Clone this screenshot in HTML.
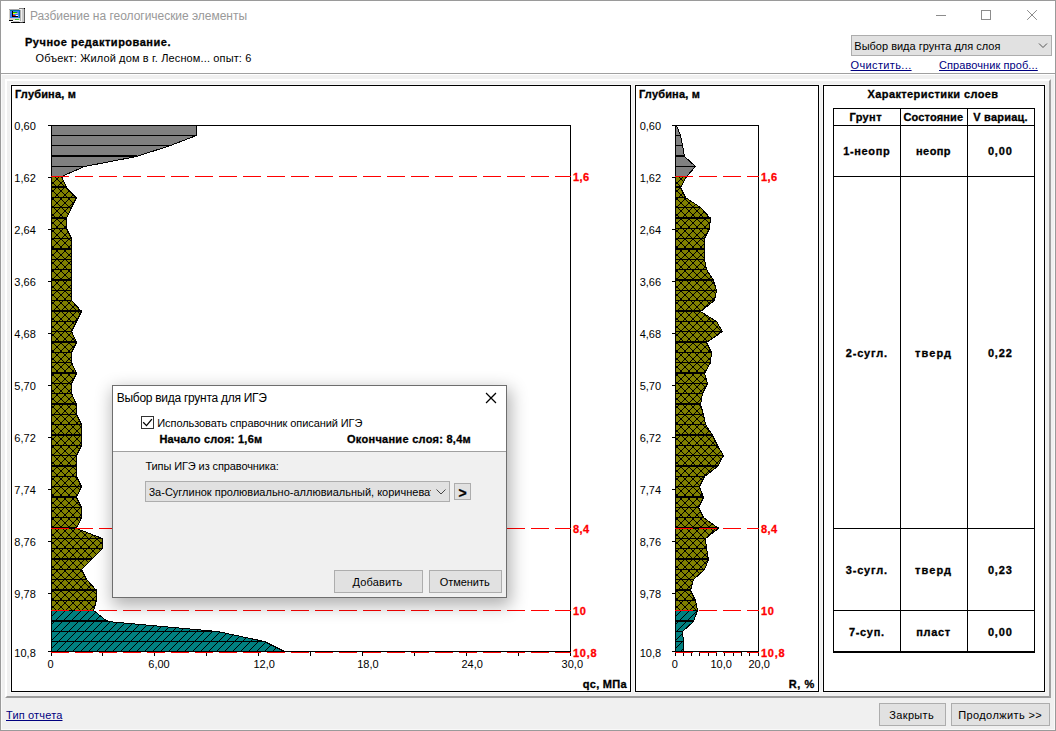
<!DOCTYPE html>
<html lang="ru"><head><meta charset="utf-8"><title>Разбиение на геологические элементы</title>
<style>
html,body{margin:0;padding:0;}
body{width:1056px;height:731px;position:relative;overflow:hidden;background:#fff;font-family:"Liberation Sans",sans-serif;}
.a{position:absolute;box-sizing:border-box;}
.t{position:absolute;white-space:nowrap;line-height:1;display:block;}
.btn{position:absolute;box-sizing:border-box;background:#e1e1e1;border:1px solid #adadad;}
svg{position:absolute;left:0;top:0;}
</style></head><body>
<!-- window frame -->
<div class="a" style="left:0;top:0;width:1056px;height:731px;border:1px solid #9a9a9a;background:#fff;"></div>
<div class="a" style="left:1px;top:73px;width:1054px;height:1px;background:#a0a0a0;"></div>
<div class="a" style="left:1px;top:74px;width:1054px;height:656px;background:#f0f0f0;border:1px solid #f9f9f9;border-top-color:#fff;"></div>
<!-- raised frame -->
<div class="a" style="left:5px;top:79px;width:1046px;height:619px;border-top:2px solid #fff;border-left:2px solid #fff;border-right:2px solid #a0a0a0;border-bottom:2px solid #9c9c9c;"></div>
<!-- panels -->
<div class="a" style="left:11px;top:85px;width:620px;height:607px;border:1px solid #000;background:#fff;box-shadow:0 0 0 1px #f7f7f7;"></div>
<div class="a" style="left:635px;top:85px;width:184px;height:607px;border:1px solid #000;background:#fff;box-shadow:0 0 0 1px #f7f7f7;"></div>
<div class="a" style="left:823px;top:85px;width:222px;height:607px;border:1px solid #000;background:#fff;box-shadow:0 0 0 1px #f7f7f7;"></div>
<!-- combo top right -->
<div class="btn" style="left:851px;top:35px;width:201px;height:21px;"></div>
<!-- buttons -->
<div class="btn" style="left:879px;top:703px;width:67px;height:23px;"></div>
<div class="btn" style="left:951px;top:703px;width:99px;height:23px;"></div>

<svg width="1056" height="731" viewBox="0 0 1056 731" shape-rendering="crispEdges">
<defs>
<pattern id="cross" width="8" height="8" patternUnits="userSpaceOnUse" fill="#000"><rect x="0" y="3" width="1" height="1"/><rect x="0" y="2" width="1" height="1"/><rect x="1" y="2" width="1" height="1"/><rect x="1" y="3" width="1" height="1"/><rect x="2" y="1" width="1" height="1"/><rect x="2" y="4" width="1" height="1"/><rect x="3" y="0" width="1" height="1"/><rect x="3" y="5" width="1" height="1"/><rect x="4" y="7" width="1" height="1"/><rect x="4" y="6" width="1" height="1"/><rect x="5" y="6" width="1" height="1"/><rect x="5" y="7" width="1" height="1"/><rect x="6" y="5" width="1" height="1"/><rect x="6" y="0" width="1" height="1"/><rect x="7" y="4" width="1" height="1"/><rect x="7" y="1" width="1" height="1"/></pattern>
<pattern id="bdiag" width="8" height="8" patternUnits="userSpaceOnUse" fill="#000"><rect x="0" y="3" width="1" height="1"/><rect x="1" y="2" width="1" height="1"/><rect x="2" y="1" width="1" height="1"/><rect x="3" y="0" width="1" height="1"/><rect x="4" y="7" width="1" height="1"/><rect x="5" y="6" width="1" height="1"/><rect x="6" y="5" width="1" height="1"/><rect x="7" y="4" width="1" height="1"/></pattern>
</defs>
<g id="chartL">
<polygon points="51.5,125.5 196.5,125.5 196.5,135.5 170.5,145.5 136.5,156.5 84.5,166.5 61.5,176.5 51.5,176.5" fill="#808080"/>
<polygon points="51.5,176.5 61.5,176.5 66.5,187.5 76.5,197.5 71.5,207.5 66.5,218.5 66.5,228.5 71.5,238.5 71.5,249.5 71.5,259.5 71.5,269.5 71.5,280.5 71.5,290.5 71.5,300.5 81.5,311.5 76.5,321.5 71.5,331.5 76.5,342.5 71.5,352.5 71.5,362.5 76.5,373.5 71.5,383.5 71.5,393.5 76.5,404.5 76.5,414.5 81.5,424.5 81.5,435.5 81.5,445.5 76.5,455.5 76.5,466.5 76.5,476.5 81.5,486.5 76.5,497.5 81.5,507.5 81.5,517.5 76.5,528.5 51.5,528.5" fill="#808000"/>
<polygon points="51.5,176.5 61.5,176.5 66.5,187.5 76.5,197.5 71.5,207.5 66.5,218.5 66.5,228.5 71.5,238.5 71.5,249.5 71.5,259.5 71.5,269.5 71.5,280.5 71.5,290.5 71.5,300.5 81.5,311.5 76.5,321.5 71.5,331.5 76.5,342.5 71.5,352.5 71.5,362.5 76.5,373.5 71.5,383.5 71.5,393.5 76.5,404.5 76.5,414.5 81.5,424.5 81.5,435.5 81.5,445.5 76.5,455.5 76.5,466.5 76.5,476.5 81.5,486.5 76.5,497.5 81.5,507.5 81.5,517.5 76.5,528.5 51.5,528.5" fill="url(#cross)"/>
<polygon points="51.5,528.5 76.5,528.5 102.5,538.5 102.5,548.5 91.5,559.5 81.5,569.5 86.5,579.5 96.5,590.5 96.5,600.5 93.5,610.5 51.5,610.5" fill="#808000"/>
<polygon points="51.5,528.5 76.5,528.5 102.5,538.5 102.5,548.5 91.5,559.5 81.5,569.5 86.5,579.5 96.5,590.5 96.5,600.5 93.5,610.5 51.5,610.5" fill="url(#cross)"/>
<polygon points="51.5,610.5 93.5,610.5 107.5,621.5 217.5,631.5 264.5,641.5 284.5,651.5 51.5,651.5" fill="#008080"/>
<polygon points="51.5,610.5 93.5,610.5 107.5,621.5 217.5,631.5 264.5,641.5 284.5,651.5 51.5,651.5" fill="url(#bdiag)"/>
<rect x="51" y="135" width="146" height="1" fill="#000"/>
<rect x="51" y="145" width="120" height="1" fill="#000"/>
<rect x="51" y="155" width="86" height="2" fill="#000"/>
<rect x="51" y="166" width="34" height="1" fill="#000"/>
<rect x="51" y="176" width="11" height="1" fill="#000"/>
<rect x="51" y="186" width="16" height="2" fill="#000"/>
<rect x="51" y="197" width="26" height="1" fill="#000"/>
<rect x="51" y="207" width="21" height="1" fill="#000"/>
<rect x="51" y="217" width="16" height="2" fill="#000"/>
<rect x="51" y="228" width="16" height="1" fill="#000"/>
<rect x="51" y="238" width="21" height="1" fill="#000"/>
<rect x="51" y="248" width="21" height="2" fill="#000"/>
<rect x="51" y="259" width="21" height="1" fill="#000"/>
<rect x="51" y="269" width="21" height="1" fill="#000"/>
<rect x="51" y="279" width="21" height="2" fill="#000"/>
<rect x="51" y="290" width="21" height="1" fill="#000"/>
<rect x="51" y="300" width="21" height="1" fill="#000"/>
<rect x="51" y="310" width="31" height="2" fill="#000"/>
<rect x="51" y="321" width="26" height="1" fill="#000"/>
<rect x="51" y="331" width="21" height="1" fill="#000"/>
<rect x="51" y="341" width="26" height="2" fill="#000"/>
<rect x="51" y="352" width="21" height="1" fill="#000"/>
<rect x="51" y="362" width="21" height="1" fill="#000"/>
<rect x="51" y="372" width="26" height="2" fill="#000"/>
<rect x="51" y="383" width="21" height="1" fill="#000"/>
<rect x="51" y="393" width="21" height="1" fill="#000"/>
<rect x="51" y="403" width="26" height="2" fill="#000"/>
<rect x="51" y="414" width="26" height="1" fill="#000"/>
<rect x="51" y="424" width="31" height="1" fill="#000"/>
<rect x="51" y="434" width="31" height="2" fill="#000"/>
<rect x="51" y="445" width="31" height="1" fill="#000"/>
<rect x="51" y="455" width="26" height="1" fill="#000"/>
<rect x="51" y="465" width="26" height="2" fill="#000"/>
<rect x="51" y="476" width="26" height="1" fill="#000"/>
<rect x="51" y="486" width="31" height="1" fill="#000"/>
<rect x="51" y="496" width="26" height="2" fill="#000"/>
<rect x="51" y="507" width="31" height="1" fill="#000"/>
<rect x="51" y="517" width="31" height="1" fill="#000"/>
<rect x="51" y="527" width="26" height="2" fill="#000"/>
<rect x="51" y="538" width="52" height="1" fill="#000"/>
<rect x="51" y="548" width="52" height="1" fill="#000"/>
<rect x="51" y="558" width="41" height="2" fill="#000"/>
<rect x="51" y="569" width="31" height="1" fill="#000"/>
<rect x="51" y="579" width="36" height="1" fill="#000"/>
<rect x="51" y="589" width="46" height="2" fill="#000"/>
<rect x="51" y="600" width="46" height="1" fill="#000"/>
<rect x="51" y="610" width="43" height="1" fill="#000"/>
<rect x="51" y="620" width="57" height="2" fill="#000"/>
<rect x="51" y="631" width="167" height="1" fill="#000"/>
<rect x="51" y="641" width="214" height="1" fill="#000"/>
<polyline points="196.5,125.5 196.5,135.5 170.5,145.5 136.5,156.5 84.5,166.5 61.5,176.5 66.5,187.5 76.5,197.5 71.5,207.5 66.5,218.5 66.5,228.5 71.5,238.5 71.5,249.5 71.5,259.5 71.5,269.5 71.5,280.5 71.5,290.5 71.5,300.5 81.5,311.5 76.5,321.5 71.5,331.5 76.5,342.5 71.5,352.5 71.5,362.5 76.5,373.5 71.5,383.5 71.5,393.5 76.5,404.5 76.5,414.5 81.5,424.5 81.5,435.5 81.5,445.5 76.5,455.5 76.5,466.5 76.5,476.5 81.5,486.5 76.5,497.5 81.5,507.5 81.5,517.5 76.5,528.5 102.5,538.5 102.5,548.5 91.5,559.5 81.5,569.5 86.5,579.5 96.5,590.5 96.5,600.5 93.5,610.5 107.5,621.5 217.5,631.5 264.5,641.5 284.5,651.5" fill="none" stroke="#000" stroke-width="1"/>
<rect x="51" y="125" width="1" height="527" fill="#000"/>
<rect x="570" y="125" width="1" height="531" fill="#000"/>
<rect x="48" y="125" width="523" height="1" fill="#000"/>
<rect x="48" y="651" width="523" height="1" fill="#000"/>
<rect x="48" y="125" width="3" height="1" fill="#000"/>
<rect x="48" y="177" width="3" height="1" fill="#000"/>
<rect x="48" y="229" width="3" height="1" fill="#000"/>
<rect x="48" y="281" width="3" height="1" fill="#000"/>
<rect x="48" y="333" width="3" height="1" fill="#000"/>
<rect x="48" y="385" width="3" height="1" fill="#000"/>
<rect x="48" y="437" width="3" height="1" fill="#000"/>
<rect x="48" y="489" width="3" height="1" fill="#000"/>
<rect x="48" y="541" width="3" height="1" fill="#000"/>
<rect x="48" y="593" width="3" height="1" fill="#000"/>
<rect x="48" y="651" width="3" height="1" fill="#000"/>
<rect x="51" y="652" width="1" height="4" fill="#000"/>
<rect x="102" y="652" width="1" height="4" fill="#000"/>
<rect x="154" y="652" width="1" height="4" fill="#000"/>
<rect x="206" y="652" width="1" height="4" fill="#000"/>
<rect x="258" y="652" width="1" height="4" fill="#000"/>
<rect x="310" y="652" width="1" height="4" fill="#000"/>
<rect x="362" y="652" width="1" height="4" fill="#000"/>
<rect x="414" y="652" width="1" height="4" fill="#000"/>
<rect x="466" y="652" width="1" height="4" fill="#000"/>
<rect x="518" y="652" width="1" height="4" fill="#000"/>
<rect x="570" y="652" width="1" height="4" fill="#000"/>
<rect x="51" y="176" width="18" height="1" fill="#f00"/>
<rect x="75" y="176" width="18" height="1" fill="#f00"/>
<rect x="99" y="176" width="18" height="1" fill="#f00"/>
<rect x="123" y="176" width="18" height="1" fill="#f00"/>
<rect x="147" y="176" width="18" height="1" fill="#f00"/>
<rect x="171" y="176" width="18" height="1" fill="#f00"/>
<rect x="195" y="176" width="18" height="1" fill="#f00"/>
<rect x="219" y="176" width="18" height="1" fill="#f00"/>
<rect x="243" y="176" width="18" height="1" fill="#f00"/>
<rect x="267" y="176" width="18" height="1" fill="#f00"/>
<rect x="291" y="176" width="18" height="1" fill="#f00"/>
<rect x="315" y="176" width="18" height="1" fill="#f00"/>
<rect x="339" y="176" width="18" height="1" fill="#f00"/>
<rect x="363" y="176" width="18" height="1" fill="#f00"/>
<rect x="387" y="176" width="18" height="1" fill="#f00"/>
<rect x="411" y="176" width="18" height="1" fill="#f00"/>
<rect x="435" y="176" width="18" height="1" fill="#f00"/>
<rect x="459" y="176" width="18" height="1" fill="#f00"/>
<rect x="483" y="176" width="18" height="1" fill="#f00"/>
<rect x="507" y="176" width="18" height="1" fill="#f00"/>
<rect x="531" y="176" width="18" height="1" fill="#f00"/>
<rect x="555" y="176" width="16" height="1" fill="#f00"/>
<rect x="51" y="528" width="18" height="1" fill="#f00"/>
<rect x="75" y="528" width="18" height="1" fill="#f00"/>
<rect x="99" y="528" width="18" height="1" fill="#f00"/>
<rect x="123" y="528" width="18" height="1" fill="#f00"/>
<rect x="147" y="528" width="18" height="1" fill="#f00"/>
<rect x="171" y="528" width="18" height="1" fill="#f00"/>
<rect x="195" y="528" width="18" height="1" fill="#f00"/>
<rect x="219" y="528" width="18" height="1" fill="#f00"/>
<rect x="243" y="528" width="18" height="1" fill="#f00"/>
<rect x="267" y="528" width="18" height="1" fill="#f00"/>
<rect x="291" y="528" width="18" height="1" fill="#f00"/>
<rect x="315" y="528" width="18" height="1" fill="#f00"/>
<rect x="339" y="528" width="18" height="1" fill="#f00"/>
<rect x="363" y="528" width="18" height="1" fill="#f00"/>
<rect x="387" y="528" width="18" height="1" fill="#f00"/>
<rect x="411" y="528" width="18" height="1" fill="#f00"/>
<rect x="435" y="528" width="18" height="1" fill="#f00"/>
<rect x="459" y="528" width="18" height="1" fill="#f00"/>
<rect x="483" y="528" width="18" height="1" fill="#f00"/>
<rect x="507" y="528" width="18" height="1" fill="#f00"/>
<rect x="531" y="528" width="18" height="1" fill="#f00"/>
<rect x="555" y="528" width="16" height="1" fill="#f00"/>
<rect x="51" y="610" width="18" height="1" fill="#f00"/>
<rect x="75" y="610" width="18" height="1" fill="#f00"/>
<rect x="99" y="610" width="18" height="1" fill="#f00"/>
<rect x="123" y="610" width="18" height="1" fill="#f00"/>
<rect x="147" y="610" width="18" height="1" fill="#f00"/>
<rect x="171" y="610" width="18" height="1" fill="#f00"/>
<rect x="195" y="610" width="18" height="1" fill="#f00"/>
<rect x="219" y="610" width="18" height="1" fill="#f00"/>
<rect x="243" y="610" width="18" height="1" fill="#f00"/>
<rect x="267" y="610" width="18" height="1" fill="#f00"/>
<rect x="291" y="610" width="18" height="1" fill="#f00"/>
<rect x="315" y="610" width="18" height="1" fill="#f00"/>
<rect x="339" y="610" width="18" height="1" fill="#f00"/>
<rect x="363" y="610" width="18" height="1" fill="#f00"/>
<rect x="387" y="610" width="18" height="1" fill="#f00"/>
<rect x="411" y="610" width="18" height="1" fill="#f00"/>
<rect x="435" y="610" width="18" height="1" fill="#f00"/>
<rect x="459" y="610" width="18" height="1" fill="#f00"/>
<rect x="483" y="610" width="18" height="1" fill="#f00"/>
<rect x="507" y="610" width="18" height="1" fill="#f00"/>
<rect x="531" y="610" width="18" height="1" fill="#f00"/>
<rect x="555" y="610" width="16" height="1" fill="#f00"/>
<rect x="51" y="652" width="18" height="1" fill="#f00"/>
<rect x="75" y="652" width="18" height="1" fill="#f00"/>
<rect x="99" y="652" width="18" height="1" fill="#f00"/>
<rect x="123" y="652" width="18" height="1" fill="#f00"/>
<rect x="147" y="652" width="18" height="1" fill="#f00"/>
<rect x="171" y="652" width="18" height="1" fill="#f00"/>
<rect x="195" y="652" width="18" height="1" fill="#f00"/>
<rect x="219" y="652" width="18" height="1" fill="#f00"/>
<rect x="243" y="652" width="18" height="1" fill="#f00"/>
<rect x="267" y="652" width="18" height="1" fill="#f00"/>
<rect x="291" y="652" width="18" height="1" fill="#f00"/>
<rect x="315" y="652" width="18" height="1" fill="#f00"/>
<rect x="339" y="652" width="18" height="1" fill="#f00"/>
<rect x="363" y="652" width="18" height="1" fill="#f00"/>
<rect x="387" y="652" width="18" height="1" fill="#f00"/>
<rect x="411" y="652" width="18" height="1" fill="#f00"/>
<rect x="435" y="652" width="18" height="1" fill="#f00"/>
<rect x="459" y="652" width="18" height="1" fill="#f00"/>
<rect x="483" y="652" width="18" height="1" fill="#f00"/>
<rect x="507" y="652" width="18" height="1" fill="#f00"/>
<rect x="531" y="652" width="18" height="1" fill="#f00"/>
<rect x="555" y="652" width="16" height="1" fill="#f00"/>
</g>
<g id="chartR">
<polygon points="675.5,125.5 676.5,125.5 680.5,135.5 682.5,145.5 684.5,156.5 695.5,166.5 686.5,176.5 675.5,176.5" fill="#808080"/>
<polygon points="675.5,176.5 686.5,176.5 680.5,187.5 685.5,197.5 700.5,207.5 710.5,218.5 709.5,228.5 704.5,238.5 704.5,249.5 704.5,259.5 706.5,269.5 713.5,280.5 716.5,290.5 714.5,300.5 700.5,311.5 716.5,321.5 722.5,331.5 706.5,342.5 711.5,352.5 710.5,362.5 704.5,373.5 707.5,383.5 702.5,393.5 700.5,404.5 703.5,414.5 705.5,424.5 712.5,435.5 717.5,445.5 723.5,455.5 717.5,466.5 704.5,476.5 699.5,486.5 703.5,497.5 698.5,507.5 703.5,517.5 718.5,528.5 675.5,528.5" fill="#808000"/>
<polygon points="675.5,176.5 686.5,176.5 680.5,187.5 685.5,197.5 700.5,207.5 710.5,218.5 709.5,228.5 704.5,238.5 704.5,249.5 704.5,259.5 706.5,269.5 713.5,280.5 716.5,290.5 714.5,300.5 700.5,311.5 716.5,321.5 722.5,331.5 706.5,342.5 711.5,352.5 710.5,362.5 704.5,373.5 707.5,383.5 702.5,393.5 700.5,404.5 703.5,414.5 705.5,424.5 712.5,435.5 717.5,445.5 723.5,455.5 717.5,466.5 704.5,476.5 699.5,486.5 703.5,497.5 698.5,507.5 703.5,517.5 718.5,528.5 675.5,528.5" fill="url(#cross)"/>
<polygon points="675.5,528.5 718.5,528.5 705.5,538.5 706.5,548.5 708.5,559.5 704.5,569.5 693.5,579.5 690.5,590.5 695.5,600.5 697.5,610.5 675.5,610.5" fill="#808000"/>
<polygon points="675.5,528.5 718.5,528.5 705.5,538.5 706.5,548.5 708.5,559.5 704.5,569.5 693.5,579.5 690.5,590.5 695.5,600.5 697.5,610.5 675.5,610.5" fill="url(#cross)"/>
<polygon points="675.5,610.5 697.5,610.5 693.5,621.5 682.5,631.5 683.5,641.5 683.5,651.5 675.5,651.5" fill="#008080"/>
<polygon points="675.5,610.5 697.5,610.5 693.5,621.5 682.5,631.5 683.5,641.5 683.5,651.5 675.5,651.5" fill="url(#bdiag)"/>
<rect x="675" y="135" width="6" height="1" fill="#000"/>
<rect x="675" y="145" width="8" height="1" fill="#000"/>
<rect x="675" y="155" width="10" height="2" fill="#000"/>
<rect x="675" y="166" width="21" height="1" fill="#000"/>
<rect x="675" y="176" width="12" height="1" fill="#000"/>
<rect x="675" y="186" width="6" height="2" fill="#000"/>
<rect x="675" y="197" width="11" height="1" fill="#000"/>
<rect x="675" y="207" width="26" height="1" fill="#000"/>
<rect x="675" y="217" width="36" height="2" fill="#000"/>
<rect x="675" y="228" width="35" height="1" fill="#000"/>
<rect x="675" y="238" width="30" height="1" fill="#000"/>
<rect x="675" y="248" width="30" height="2" fill="#000"/>
<rect x="675" y="259" width="30" height="1" fill="#000"/>
<rect x="675" y="269" width="32" height="1" fill="#000"/>
<rect x="675" y="279" width="39" height="2" fill="#000"/>
<rect x="675" y="290" width="42" height="1" fill="#000"/>
<rect x="675" y="300" width="40" height="1" fill="#000"/>
<rect x="675" y="310" width="26" height="2" fill="#000"/>
<rect x="675" y="321" width="42" height="1" fill="#000"/>
<rect x="675" y="331" width="48" height="1" fill="#000"/>
<rect x="675" y="341" width="32" height="2" fill="#000"/>
<rect x="675" y="352" width="37" height="1" fill="#000"/>
<rect x="675" y="362" width="36" height="1" fill="#000"/>
<rect x="675" y="372" width="30" height="2" fill="#000"/>
<rect x="675" y="383" width="33" height="1" fill="#000"/>
<rect x="675" y="393" width="28" height="1" fill="#000"/>
<rect x="675" y="403" width="26" height="2" fill="#000"/>
<rect x="675" y="414" width="29" height="1" fill="#000"/>
<rect x="675" y="424" width="31" height="1" fill="#000"/>
<rect x="675" y="434" width="38" height="2" fill="#000"/>
<rect x="675" y="445" width="43" height="1" fill="#000"/>
<rect x="675" y="455" width="49" height="1" fill="#000"/>
<rect x="675" y="465" width="43" height="2" fill="#000"/>
<rect x="675" y="476" width="30" height="1" fill="#000"/>
<rect x="675" y="486" width="25" height="1" fill="#000"/>
<rect x="675" y="496" width="29" height="2" fill="#000"/>
<rect x="675" y="507" width="24" height="1" fill="#000"/>
<rect x="675" y="517" width="29" height="1" fill="#000"/>
<rect x="675" y="527" width="44" height="2" fill="#000"/>
<rect x="675" y="538" width="31" height="1" fill="#000"/>
<rect x="675" y="548" width="32" height="1" fill="#000"/>
<rect x="675" y="558" width="34" height="2" fill="#000"/>
<rect x="675" y="569" width="30" height="1" fill="#000"/>
<rect x="675" y="579" width="19" height="1" fill="#000"/>
<rect x="675" y="589" width="16" height="2" fill="#000"/>
<rect x="675" y="600" width="21" height="1" fill="#000"/>
<rect x="675" y="610" width="23" height="1" fill="#000"/>
<rect x="675" y="620" width="19" height="2" fill="#000"/>
<rect x="675" y="631" width="8" height="1" fill="#000"/>
<rect x="675" y="641" width="9" height="1" fill="#000"/>
<polyline points="676.5,125.5 680.5,135.5 682.5,145.5 684.5,156.5 695.5,166.5 686.5,176.5 680.5,187.5 685.5,197.5 700.5,207.5 710.5,218.5 709.5,228.5 704.5,238.5 704.5,249.5 704.5,259.5 706.5,269.5 713.5,280.5 716.5,290.5 714.5,300.5 700.5,311.5 716.5,321.5 722.5,331.5 706.5,342.5 711.5,352.5 710.5,362.5 704.5,373.5 707.5,383.5 702.5,393.5 700.5,404.5 703.5,414.5 705.5,424.5 712.5,435.5 717.5,445.5 723.5,455.5 717.5,466.5 704.5,476.5 699.5,486.5 703.5,497.5 698.5,507.5 703.5,517.5 718.5,528.5 705.5,538.5 706.5,548.5 708.5,559.5 704.5,569.5 693.5,579.5 690.5,590.5 695.5,600.5 697.5,610.5 693.5,621.5 682.5,631.5 683.5,641.5 683.5,651.5" fill="none" stroke="#000" stroke-width="1"/>
<rect x="675" y="125" width="1" height="527" fill="#000"/>
<rect x="758" y="125" width="1" height="531" fill="#000"/>
<rect x="672" y="125" width="87" height="1" fill="#000"/>
<rect x="672" y="651" width="87" height="1" fill="#000"/>
<rect x="672" y="125" width="3" height="1" fill="#000"/>
<rect x="672" y="177" width="3" height="1" fill="#000"/>
<rect x="672" y="229" width="3" height="1" fill="#000"/>
<rect x="672" y="281" width="3" height="1" fill="#000"/>
<rect x="672" y="333" width="3" height="1" fill="#000"/>
<rect x="672" y="385" width="3" height="1" fill="#000"/>
<rect x="672" y="437" width="3" height="1" fill="#000"/>
<rect x="672" y="489" width="3" height="1" fill="#000"/>
<rect x="672" y="541" width="3" height="1" fill="#000"/>
<rect x="672" y="593" width="3" height="1" fill="#000"/>
<rect x="672" y="651" width="3" height="1" fill="#000"/>
<rect x="675" y="652" width="1" height="4" fill="#000"/>
<rect x="683" y="652" width="1" height="4" fill="#000"/>
<rect x="691" y="652" width="1" height="4" fill="#000"/>
<rect x="699" y="652" width="1" height="4" fill="#000"/>
<rect x="708" y="652" width="1" height="4" fill="#000"/>
<rect x="716" y="652" width="1" height="4" fill="#000"/>
<rect x="724" y="652" width="1" height="4" fill="#000"/>
<rect x="733" y="652" width="1" height="4" fill="#000"/>
<rect x="741" y="652" width="1" height="4" fill="#000"/>
<rect x="749" y="652" width="1" height="4" fill="#000"/>
<rect x="758" y="652" width="1" height="4" fill="#000"/>
<rect x="675" y="176" width="18" height="1" fill="#f00"/>
<rect x="699" y="176" width="18" height="1" fill="#f00"/>
<rect x="723" y="176" width="18" height="1" fill="#f00"/>
<rect x="747" y="176" width="12" height="1" fill="#f00"/>
<rect x="675" y="528" width="18" height="1" fill="#f00"/>
<rect x="699" y="528" width="18" height="1" fill="#f00"/>
<rect x="723" y="528" width="18" height="1" fill="#f00"/>
<rect x="747" y="528" width="12" height="1" fill="#f00"/>
<rect x="675" y="610" width="18" height="1" fill="#f00"/>
<rect x="699" y="610" width="18" height="1" fill="#f00"/>
<rect x="723" y="610" width="18" height="1" fill="#f00"/>
<rect x="747" y="610" width="12" height="1" fill="#f00"/>
<rect x="675" y="652" width="18" height="1" fill="#f00"/>
<rect x="699" y="652" width="18" height="1" fill="#f00"/>
<rect x="723" y="652" width="18" height="1" fill="#f00"/>
<rect x="747" y="652" width="12" height="1" fill="#f00"/>
</g>
<!-- table grid -->
<g fill="#000">
<rect x="833" y="108" width="202" height="1"/>
<rect x="833" y="125" width="202" height="1"/>
<rect x="833" y="176" width="202" height="1"/>
<rect x="833" y="528" width="202" height="1"/>
<rect x="833" y="610" width="202" height="1"/>
<rect x="833" y="651" width="202" height="2"/>
<rect x="833" y="108" width="1" height="545"/>
<rect x="900" y="108" width="1" height="545"/>
<rect x="967" y="108" width="1" height="545"/>
<rect x="1034" y="108" width="1" height="545"/>
</g>
<!-- title bar controls -->
<g fill="none" stroke="#8c8c8c" stroke-width="1">
<path d="M936 15.5H946"/>
<rect x="981.5" y="10.5" width="9" height="9"/>
</g>
<g fill="none" stroke="#8c8c8c" stroke-width="1" shape-rendering="auto">
<path d="M1027.5 10.5L1036.5 19.5M1036.5 10.5L1027.5 19.5" stroke-linecap="square"/>
<path d="M1039 43.5L1043 47.5L1047 43.5" stroke="#555"/>
</g>
<!-- app icon -->
<g id="icon">
<rect x="19" y="8" width="6" height="15" fill="#f0f0f0"/>
<rect x="22" y="9" width="2" height="13" fill="#c8c8c8"/>
<rect x="19" y="8" width="6" height="1" fill="#808080"/>
<rect x="24" y="8" width="1" height="15" fill="#606060"/>
<rect x="19" y="22" width="6" height="1" fill="#404040"/>
<rect x="20" y="10" width="1" height="11" fill="#b0b0b0"/>
<rect x="24" y="8" width="1" height="1" fill="#000"/>
<rect x="23" y="22" width="2" height="1" fill="#000"/>
<rect x="9" y="9" width="11" height="11" fill="#d4d0c8"/>
<rect x="9" y="9" width="10" height="1" fill="#a8a8a8"/>
<rect x="10" y="10" width="10" height="8" fill="#3f7ff0"/>
<rect x="10" y="10" width="10" height="1" fill="#0070a8"/>
<rect x="19" y="10" width="1" height="8" fill="#0070a8"/>
<rect x="12" y="11" width="1" height="6" fill="#000"/>
<rect x="12" y="16" width="6" height="1" fill="#000"/>
<rect x="13" y="12" width="4" height="1" fill="#00c000"/>
<rect x="13" y="13" width="2" height="1" fill="#ffff00"/>
<rect x="15" y="13" width="3" height="1" fill="#c0c0c0"/>
<rect x="13" y="15" width="2" height="1" fill="#ff0000"/>
<rect x="16" y="15" width="2" height="1" fill="#fff"/>
<rect x="15" y="19" width="4" height="1" fill="#30d030"/>
<rect x="9" y="20" width="4" height="1" fill="#000"/>
<rect x="13" y="21" width="6" height="1" fill="#c0c0c0"/>
<rect x="11" y="22" width="9" height="1" fill="#000"/>
</g>
</svg>

<!-- dialog -->
<div class="a" style="left:112px;top:385px;width:395px;height:213px;border:1px solid #6e6e6e;background:#f0f0f0;box-shadow:2px 6px 16px 2px rgba(0,0,0,0.30);"></div>
<div class="a" style="left:113px;top:386px;width:393px;height:65px;background:#fff;"></div>
<div class="a" style="left:113px;top:451px;width:393px;height:1px;background:#a0a0a0;"></div>
<div class="a" style="left:141px;top:416px;width:13px;height:13px;border:1px solid #333;background:#fff;"></div>
<div class="btn" style="left:145px;top:481px;width:305px;height:21px;"></div>
<div class="btn" style="left:454px;top:483px;width:17px;height:17px;"></div>
<div class="btn" style="left:334px;top:570px;width:89px;height:23px;"></div>
<div class="btn" style="left:429px;top:570px;width:73px;height:23px;"></div>
<svg width="1056" height="731" viewBox="0 0 1056 731">
<path d="M486.5 393.5L495.5 402.5M495.5 393.5L486.5 402.5" stroke="#000" stroke-width="1.25" stroke-linecap="square" fill="none"/>
<path d="M143.2 422.3L146.5 425.6L151.9 419.2" stroke="#000" stroke-width="1.3" fill="none"/>
<path d="M436.5 489.5L441 494L445.5 489.5" stroke="#444" stroke-width="1" fill="none"/>
</svg>
<span class="t" id="t0" style="left:30.00px;top:10px;font-size:12px;color:#999;letter-spacing:-0.026px;">Разбиение на геологические элементы</span>
<span class="t" id="t1" style="left:25.00px;top:37px;font-size:11px;color:#000;font-weight:bold;-webkit-text-stroke:0.3px;letter-spacing:0.512px;">Ручное редактирование.</span>
<span class="t" id="t2" style="left:35.50px;top:53px;font-size:11px;color:#000;letter-spacing:0.134px;">Объект: Жилой дом в г. Лесном... опыт: 6</span>
<span class="t" id="t3" style="left:15.00px;top:89px;font-size:11px;color:#000;font-weight:bold;-webkit-text-stroke:0.3px;letter-spacing:0.178px;">Глубина, м</span>
<span class="t" id="t4" style="left:639.00px;top:89px;font-size:11px;color:#000;font-weight:bold;-webkit-text-stroke:0.3px;letter-spacing:0.178px;">Глубина, м</span>
<span class="t" id="t5" style="left:14.30px;top:121px;font-size:11px;color:#000;letter-spacing:0.045px;">0,60</span>
<span class="t" id="t6" style="left:639.80px;top:121px;font-size:11px;color:#000;letter-spacing:-0.055px;">0,60</span>
<span class="t" id="t7" style="left:14.30px;top:173px;font-size:11px;color:#000;letter-spacing:0.045px;">1,62</span>
<span class="t" id="t8" style="left:639.80px;top:173px;font-size:11px;color:#000;letter-spacing:-0.055px;">1,62</span>
<span class="t" id="t9" style="left:14.30px;top:225px;font-size:11px;color:#000;letter-spacing:0.045px;">2,64</span>
<span class="t" id="t10" style="left:639.80px;top:225px;font-size:11px;color:#000;letter-spacing:-0.055px;">2,64</span>
<span class="t" id="t11" style="left:14.30px;top:277px;font-size:11px;color:#000;letter-spacing:0.045px;">3,66</span>
<span class="t" id="t12" style="left:639.80px;top:277px;font-size:11px;color:#000;letter-spacing:-0.055px;">3,66</span>
<span class="t" id="t13" style="left:14.30px;top:329px;font-size:11px;color:#000;letter-spacing:0.045px;">4,68</span>
<span class="t" id="t14" style="left:639.80px;top:329px;font-size:11px;color:#000;letter-spacing:-0.055px;">4,68</span>
<span class="t" id="t15" style="left:14.30px;top:381px;font-size:11px;color:#000;letter-spacing:0.045px;">5,70</span>
<span class="t" id="t16" style="left:639.80px;top:381px;font-size:11px;color:#000;letter-spacing:-0.055px;">5,70</span>
<span class="t" id="t17" style="left:14.30px;top:433px;font-size:11px;color:#000;letter-spacing:0.045px;">6,72</span>
<span class="t" id="t18" style="left:639.80px;top:433px;font-size:11px;color:#000;letter-spacing:-0.055px;">6,72</span>
<span class="t" id="t19" style="left:14.30px;top:485px;font-size:11px;color:#000;letter-spacing:0.045px;">7,74</span>
<span class="t" id="t20" style="left:639.80px;top:485px;font-size:11px;color:#000;letter-spacing:-0.055px;">7,74</span>
<span class="t" id="t21" style="left:14.30px;top:537px;font-size:11px;color:#000;letter-spacing:0.045px;">8,76</span>
<span class="t" id="t22" style="left:639.80px;top:537px;font-size:11px;color:#000;letter-spacing:-0.055px;">8,76</span>
<span class="t" id="t23" style="left:14.30px;top:589px;font-size:11px;color:#000;letter-spacing:0.045px;">9,78</span>
<span class="t" id="t24" style="left:639.80px;top:589px;font-size:11px;color:#000;letter-spacing:-0.055px;">9,78</span>
<span class="t" id="t25" style="left:14.30px;top:648px;font-size:11px;color:#000;letter-spacing:0.045px;">10,8</span>
<span class="t" id="t26" style="left:639.80px;top:648px;font-size:11px;color:#000;letter-spacing:-0.055px;">10,8</span>
<span class="t" id="t27" style="left:47.40px;top:659px;font-size:11px;color:#000;">0</span>
<span class="t" id="t28" style="left:148.30px;top:659px;font-size:11px;color:#000;">6,00</span>
<span class="t" id="t29" style="left:253.40px;top:659px;font-size:11px;color:#000;">12,0</span>
<span class="t" id="t30" style="left:357.20px;top:659px;font-size:11px;color:#000;">18,0</span>
<span class="t" id="t31" style="left:461.50px;top:659px;font-size:11px;color:#000;">24,0</span>
<span class="t" id="t32" style="left:561.60px;top:659px;font-size:11px;color:#000;">30,0</span>
<span class="t" id="t33" style="left:671.70px;top:659px;font-size:11px;color:#000;">0</span>
<span class="t" id="t34" style="left:710.40px;top:659px;font-size:11px;color:#000;">10,0</span>
<span class="t" id="t35" style="left:748.50px;top:659px;font-size:11px;color:#000;">20,0</span>
<span class="t" id="t36" style="left:626.80px;top:679px;font-size:11px;color:#000;font-weight:bold;-webkit-text-stroke:0.3px;letter-spacing:0.266px;transform:translateX(-100%);">qc, МПа</span>
<span class="t" id="t37" style="left:814.80px;top:679px;font-size:11px;color:#000;font-weight:bold;-webkit-text-stroke:0.3px;letter-spacing:0.539px;transform:translateX(-100%);">R, %</span>
<span class="t" id="t38" style="left:573.00px;top:172px;font-size:11px;color:#f00;font-weight:bold;-webkit-text-stroke:0.3px;letter-spacing:0.368px;">1,6</span>
<span class="t" id="t39" style="left:761.00px;top:172px;font-size:11px;color:#f00;font-weight:bold;-webkit-text-stroke:0.3px;letter-spacing:0.368px;">1,6</span>
<span class="t" id="t40" style="left:573.00px;top:524px;font-size:11px;color:#f00;font-weight:bold;-webkit-text-stroke:0.3px;letter-spacing:0.368px;">8,4</span>
<span class="t" id="t41" style="left:761.00px;top:524px;font-size:11px;color:#f00;font-weight:bold;-webkit-text-stroke:0.3px;letter-spacing:0.368px;">8,4</span>
<span class="t" id="t42" style="left:573.00px;top:606px;font-size:11px;color:#f00;font-weight:bold;-webkit-text-stroke:0.3px;letter-spacing:0.625px;">10</span>
<span class="t" id="t43" style="left:761.00px;top:606px;font-size:11px;color:#f00;font-weight:bold;-webkit-text-stroke:0.3px;letter-spacing:0.625px;">10</span>
<span class="t" id="t44" style="left:573.00px;top:648px;font-size:11px;color:#f00;font-weight:bold;-webkit-text-stroke:0.3px;letter-spacing:0.720px;">10,8</span>
<span class="t" id="t45" style="left:761.00px;top:648px;font-size:11px;color:#f00;font-weight:bold;-webkit-text-stroke:0.3px;letter-spacing:0.720px;">10,8</span>
<span class="t" id="t46" style="left:933.00px;top:89px;font-size:11px;color:#000;font-weight:bold;-webkit-text-stroke:0.3px;letter-spacing:0.403px;transform:translateX(-50%);">Характеристики слоев</span>
<span class="t" id="t47" style="left:865.70px;top:112px;font-size:11px;color:#000;font-weight:bold;-webkit-text-stroke:0.3px;letter-spacing:0.391px;transform:translateX(-50%);">Грунт</span>
<span class="t" id="t48" style="left:933.40px;top:112px;font-size:11px;color:#000;font-weight:bold;-webkit-text-stroke:0.3px;letter-spacing:0.155px;transform:translateX(-50%);">Состояние</span>
<span class="t" id="t49" style="left:1000.50px;top:112px;font-size:11px;color:#000;font-weight:bold;-webkit-text-stroke:0.3px;letter-spacing:0.217px;transform:translateX(-50%);">V вариац.</span>
<span class="t" id="t50" style="left:866.80px;top:146px;font-size:11px;color:#000;font-weight:bold;-webkit-text-stroke:0.3px;letter-spacing:0.625px;transform:translateX(-50%);">1-неопр</span>
<span class="t" id="t51" style="left:933.50px;top:146px;font-size:11px;color:#000;font-weight:bold;-webkit-text-stroke:0.3px;letter-spacing:0.428px;transform:translateX(-50%);">неопр</span>
<span class="t" id="t52" style="left:1000.30px;top:146px;font-size:11px;color:#000;font-weight:bold;-webkit-text-stroke:0.3px;letter-spacing:0.845px;transform:translateX(-50%);">0,00</span>
<span class="t" id="t53" style="left:866.80px;top:348px;font-size:11px;color:#000;font-weight:bold;-webkit-text-stroke:0.3px;letter-spacing:0.804px;transform:translateX(-50%);">2-сугл.</span>
<span class="t" id="t54" style="left:933.50px;top:348px;font-size:11px;color:#000;font-weight:bold;-webkit-text-stroke:0.3px;letter-spacing:1.087px;transform:translateX(-50%);">тверд</span>
<span class="t" id="t55" style="left:1000.30px;top:348px;font-size:11px;color:#000;font-weight:bold;-webkit-text-stroke:0.3px;letter-spacing:0.845px;transform:translateX(-50%);">0,22</span>
<span class="t" id="t56" style="left:866.80px;top:565px;font-size:11px;color:#000;font-weight:bold;-webkit-text-stroke:0.3px;letter-spacing:0.804px;transform:translateX(-50%);">3-сугл.</span>
<span class="t" id="t57" style="left:933.50px;top:565px;font-size:11px;color:#000;font-weight:bold;-webkit-text-stroke:0.3px;letter-spacing:1.087px;transform:translateX(-50%);">тверд</span>
<span class="t" id="t58" style="left:1000.30px;top:565px;font-size:11px;color:#000;font-weight:bold;-webkit-text-stroke:0.3px;letter-spacing:0.845px;transform:translateX(-50%);">0,23</span>
<span class="t" id="t59" style="left:866.80px;top:627px;font-size:11px;color:#000;font-weight:bold;-webkit-text-stroke:0.3px;letter-spacing:0.680px;transform:translateX(-50%);">7-суп.</span>
<span class="t" id="t60" style="left:933.50px;top:627px;font-size:11px;color:#000;font-weight:bold;-webkit-text-stroke:0.3px;letter-spacing:0.627px;transform:translateX(-50%);">пласт</span>
<span class="t" id="t61" style="left:1000.30px;top:627px;font-size:11px;color:#000;font-weight:bold;-webkit-text-stroke:0.3px;letter-spacing:0.845px;transform:translateX(-50%);">0,00</span>
<span class="t" id="t62" style="left:854.30px;top:41px;font-size:11px;color:#000;">Выбор вида грунта для слоя</span>
<span class="t" id="t63" style="left:850.60px;top:60px;font-size:11px;color:#000080;letter-spacing:0.358px;text-decoration:underline;text-decoration-skip-ink:none;">Очистить...</span>
<span class="t" id="t64" style="left:939.00px;top:60px;font-size:11px;color:#000080;letter-spacing:0.088px;text-decoration:underline;text-decoration-skip-ink:none;">Справочник проб...</span>
<span class="t" id="t65" style="left:6.00px;top:710px;font-size:11px;color:#000080;letter-spacing:0.167px;text-decoration:underline;text-decoration-skip-ink:none;">Тип отчета</span>
<span class="t" id="t66" style="left:911.70px;top:710px;font-size:11px;color:#000;letter-spacing:0.346px;transform:translateX(-50%);">Закрыть</span>
<span class="t" id="t67" style="left:1000.20px;top:710px;font-size:11px;color:#000;letter-spacing:0.400px;transform:translateX(-50%);">Продолжить &gt;&gt;</span>
<span class="t" id="t68" style="left:116.70px;top:392px;font-size:12px;color:#000;letter-spacing:-0.271px;">Выбор вида грунта для ИГЭ</span>
<span class="t" id="t69" style="left:157.30px;top:418px;font-size:11px;color:#000;letter-spacing:-0.083px;">Использовать справочник описаний ИГЭ</span>
<span class="t" id="t70" style="left:159.40px;top:434px;font-size:11px;color:#000;font-weight:bold;-webkit-text-stroke:0.3px;letter-spacing:0.234px;">Начало слоя: 1,6м</span>
<span class="t" id="t71" style="left:347.00px;top:434px;font-size:11px;color:#000;font-weight:bold;-webkit-text-stroke:0.3px;letter-spacing:0.277px;">Окончание слоя: 8,4м</span>
<span class="t" id="t72" style="left:145.40px;top:461px;font-size:11px;color:#000;letter-spacing:-0.102px;">Типы ИГЭ из справочника:</span>
<span class="t" id="t73" style="left:149.00px;top:487px;font-size:11px;color:#000;max-width:281.5px;overflow:hidden;">3а-Суглинок пролювиально-аллювиальный, коричневато-серый</span>
<span class="t" id="t74" style="left:462.50px;top:486px;font-size:14px;color:#000;font-weight:bold;-webkit-text-stroke:0.3px;transform:translateX(-50%);">&gt;</span>
<span class="t" id="t75" style="left:377.50px;top:577px;font-size:11px;color:#000;letter-spacing:0.147px;transform:translateX(-50%);">Добавить</span>
<span class="t" id="t76" style="left:464.70px;top:577px;font-size:11px;color:#000;letter-spacing:-0.033px;transform:translateX(-50%);">Отменить</span>
</body></html>
